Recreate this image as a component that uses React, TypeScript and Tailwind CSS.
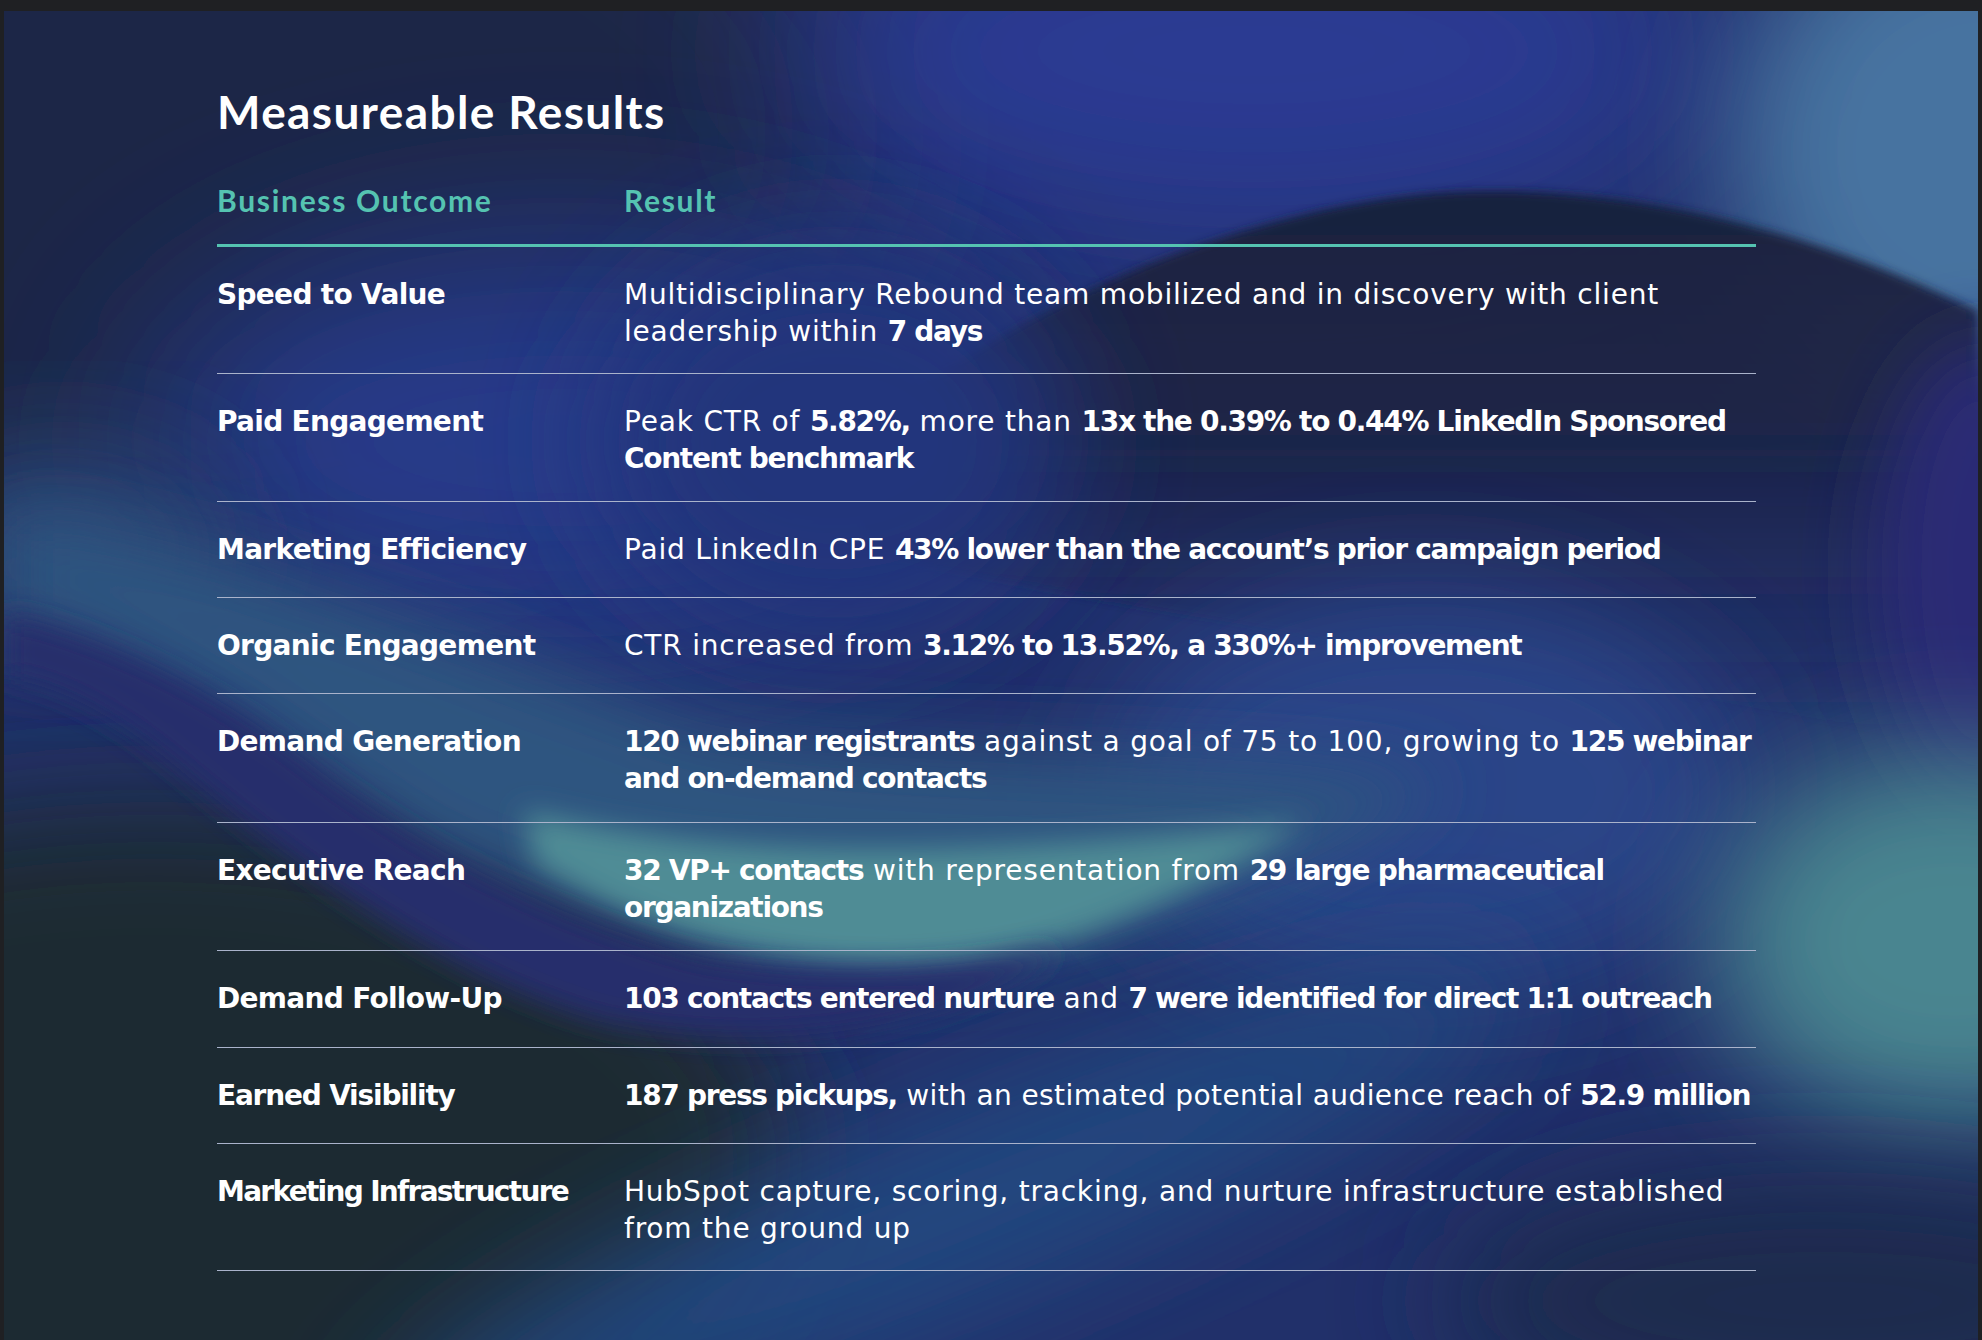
import React from 'react'

type Seg = [string, boolean]

interface ResultRow {
  outcome: string
  lines: Seg[][]
  height: string
  labelTracking?: string
  textTracking?: string
}

const rows: ResultRow[] = [
  {
    outcome: 'Speed to Value',
    height: 'h-[127px]',
    lines: [
      [['Multidisciplinary Rebound team mobilized and in discovery with client', false]],
      [['leadership within ', false], ['7 days', true]],
    ],
  },
  {
    outcome: 'Paid Engagement',
    height: 'h-[128px]',
    lines: [
      [
        ['Peak CTR of ', false],
        ['5.82%,', true],
        [' more than ', false],
        ['13x the 0.39% to 0.44% LinkedIn Sponsored', true],
      ],
      [['Content benchmark', true]],
    ],
  },
  {
    outcome: 'Marketing Efficiency',
    height: 'h-[96px]',
    lines: [[['Paid LinkedIn CPE ', false], ['43% lower than the account\u2019s prior campaign period', true]]],
  },
  {
    outcome: 'Organic Engagement',
    height: 'h-[96px]',
    lines: [[['CTR increased from ', false], ['3.12% to 13.52%, a 330%+ improvement', true]]],
  },
  {
    outcome: 'Demand Generation',
    height: 'h-[129px]',
    lines: [
      [
        ['120 webinar registrants', true],
        [' against a goal of 75 to 100, growing to ', false],
        ['125 webinar', true],
      ],
      [['and on-demand contacts', true]],
    ],
  },
  {
    outcome: 'Executive Reach',
    height: 'h-[128px]',
    lines: [
      [
        ['32 VP+ contacts', true],
        [' with representation from ', false],
        ['29 large pharmaceutical', true],
      ],
      [['organizations', true]],
    ],
  },
  {
    outcome: 'Demand Follow-Up',
    height: 'h-[97px]',
    lines: [
      [
        ['103 contacts entered nurture', true],
        [' and ', false],
        ['7 were identified for direct 1:1 outreach', true],
      ],
    ],
  },
  {
    outcome: 'Earned Visibility',
    height: 'h-[96px]',
    labelTracking: 'tracking-[-1.2px]',
    textTracking: 'tracking-[0.4px]',
    lines: [
      [
        ['187 press pickups,', true],
        [' with an estimated potential audience reach of ', false],
        ['52.9 million', true],
      ],
    ],
  },
  {
    outcome: 'Marketing Infrastructure',
    height: 'h-[127px]',
    labelTracking: 'tracking-[-1.7px]',
    lines: [
      [['HubSpot capture, scoring, tracking, and nurture infrastructure established', false]],
      [['from the ground up', false]],
    ],
  },
]

// soft wave artwork behind the table
function Backdrop() {
  return (
    <svg
      className="absolute inset-0 h-full w-full"
      viewBox="0 0 1974 1329"
      preserveAspectRatio="none"
      aria-hidden="true"
    >
      <defs>
        <linearGradient id="darkwave" gradientUnits="userSpaceOnUse" x1="0" y1="180" x2="0" y2="740">
          <stop offset="0" stopColor="#191f3d" stopOpacity="1" />
          <stop offset="0.45" stopColor="#1b2245" stopOpacity="0.9" />
          <stop offset="1" stopColor="#1f2b5c" stopOpacity="0" />
        </linearGradient>
        <filter id="b90" x="-50%" y="-50%" width="200%" height="200%">
          <feGaussianBlur stdDeviation="90" />
        </filter>
        <filter id="b60" x="-50%" y="-50%" width="200%" height="200%">
          <feGaussianBlur stdDeviation="60" />
        </filter>
        <filter id="b35" x="-50%" y="-50%" width="200%" height="200%">
          <feGaussianBlur stdDeviation="35" />
        </filter>
        <filter id="b14" x="-50%" y="-50%" width="200%" height="200%">
          <feGaussianBlur stdDeviation="14" />
        </filter>
        <filter id="b5" x="-50%" y="-50%" width="200%" height="200%">
          <feGaussianBlur stdDeviation="5" />
        </filter>
      </defs>
      <rect width="1974" height="1329" fill="#21306a" />
      <ellipse cx="120" cy="120" rx="760" ry="440" fill="#1b2747" filter="url(#b90)" />
      <ellipse cx="1250" cy="40" rx="460" ry="200" fill="#2b3b93" filter="url(#b90)" />
      <ellipse cx="560" cy="430" rx="420" ry="200" fill="#273a8a" filter="url(#b90)" />
      <ellipse cx="60" cy="540" rx="160" ry="95" fill="#2a4676" filter="url(#b60)" />
      <ellipse cx="1985" cy="140" rx="260" ry="260" fill="#4673a0" filter="url(#b60)" />
      <path
        d="M 860 420 C 1050 265, 1300 180, 1484 180 C 1680 180, 1850 240, 1974 300 L 1974 740 C 1600 660, 1200 620, 860 540 Z"
        fill="url(#darkwave)"
        filter="url(#b5)"
      />
      <ellipse cx="830" cy="430" rx="240" ry="200" fill="#24347c" filter="url(#b60)" />
      <ellipse cx="1980" cy="560" rx="110" ry="230" fill="#2b2c74" filter="url(#b35)" />
      <ellipse cx="1420" cy="780" rx="320" ry="200" fill="#2a4588" filter="url(#b60)" />
      <ellipse cx="1950" cy="930" rx="240" ry="190" fill="#4a8590" filter="url(#b60)" />
      <ellipse cx="150" cy="1150" rx="640" ry="360" fill="#1a2b33" filter="url(#b60)" />
      {/* teal crest of the lower wave */}
      <path
        d="M 0 500 C 200 520, 420 615, 700 715 C 950 752, 1200 732, 1450 772 C 1300 860, 1150 925, 1000 952 C 850 972, 650 940, 421 842 C 300 762, 170 652, 0 602 Z"
        fill="#2e5480"
        filter="url(#b35)"
      />
      <path
        d="M 520 800 C 720 850, 950 848, 1300 812 C 1180 890, 1070 935, 960 955 C 800 968, 650 928, 530 852 Z"
        fill="#4f8c95"
        filter="url(#b14)"
      />
      {/* navy band under the crest */}
      <path
        d="M 0 602 C 110 627, 220 682, 320 764 C 430 844, 560 912, 700 947 C 800 964, 920 964, 1060 938 C 980 1002, 800 1052, 600 1012 C 450 972, 300 862, 180 762 C 110 702, 50 672, 0 667 Z"
        fill="#262e6c"
        filter="url(#b14)"
      />
      <ellipse
        cx="950"
        cy="1200"
        rx="620"
        ry="100"
        fill="#24467f"
        filter="url(#b60)"
        transform="rotate(-22 950 1200)"
      />
      <ellipse cx="1820" cy="1290" rx="380" ry="130" fill="#1d2c4e" filter="url(#b60)" />
    </svg>
  )
}

export default function App() {
  return (
    <div className="w-[1982px] h-[1340px] bg-[#1f2023] pt-[11px] pl-[4px] pr-[4px]">
      <div className="relative h-[1329px] w-[1974px] overflow-hidden text-white">
        <Backdrop />
        <div className="relative pl-[213px] pt-[78px] w-[1752px]">
          <h1 className="font-['Lato',sans-serif] text-[46px] leading-[46px] font-bold tracking-[1.4px]">
            Measureable Results
          </h1>
          <div className="mt-[50px] flex pb-[29px] border-b-[3px] border-[#55c3b1] font-['Lato',sans-serif] text-[30px] leading-[30px] font-bold tracking-[1.7px] text-[#55c3b1]">
            <div className="w-[407px]">Business Outcome</div>
            <div>Result</div>
          </div>
          {rows.map((row) => (
            <div
              key={row.outcome}
              className={`flex pt-[29px] border-b border-[#aab3cb] font-['DejaVu_Sans',sans-serif] text-[28px] leading-[37px] ${row.height}`}
            >
              <div className={`w-[407px] shrink-0 font-bold ${row.labelTracking ?? 'tracking-[-0.7px]'}`}>
                {row.outcome}
              </div>
              <div className={`font-normal ${row.textTracking ?? 'tracking-[0.8px]'}`}>
                {row.lines.map((line, i) => (
                  <div key={i} className="whitespace-nowrap">
                    {line.map(([text, bold], j) => (
                      <span key={j} className={bold ? 'font-bold tracking-[-1.3px]' : ''}>
                        {text}
                      </span>
                    ))}
                  </div>
                ))}
              </div>
            </div>
          ))}
        </div>
      </div>
    </div>
  )
}
